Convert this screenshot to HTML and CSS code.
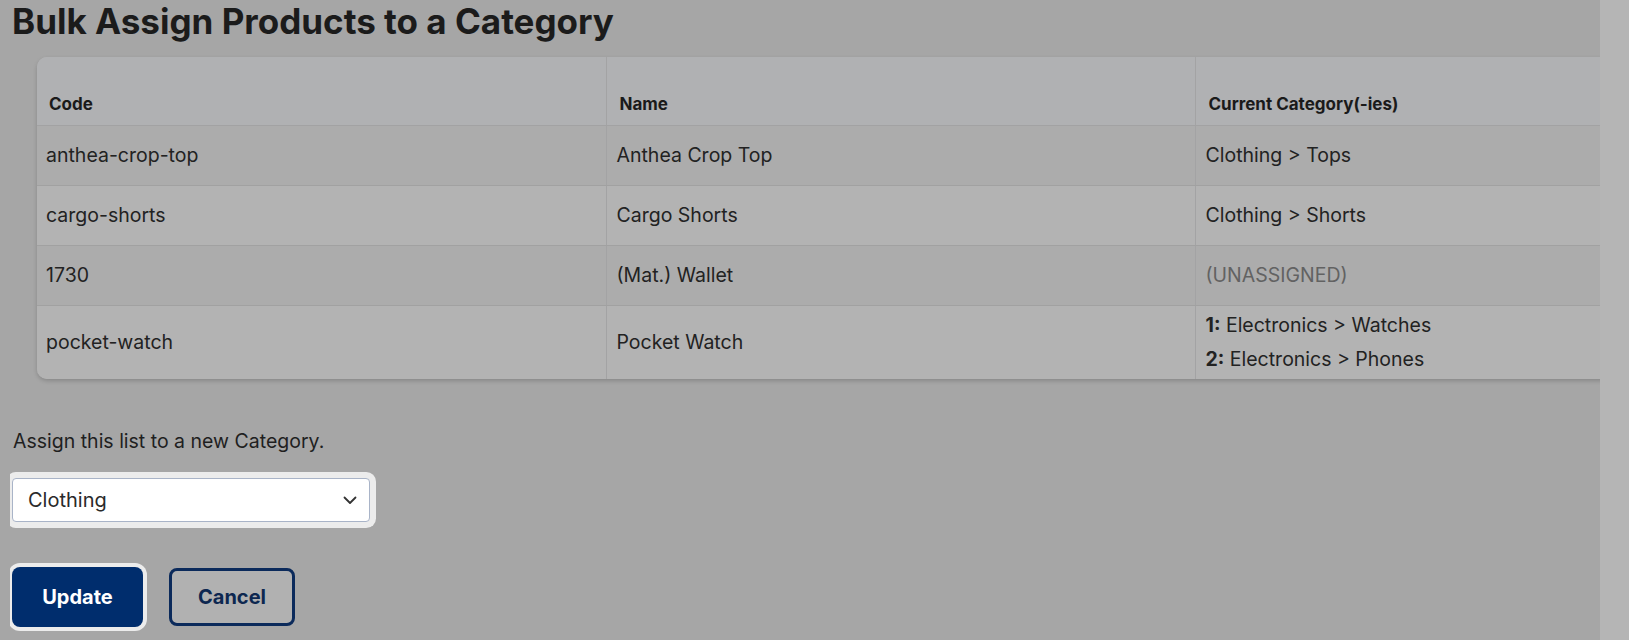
FILE: index.html
```html
<!DOCTYPE html>
<html lang="en">
<head>
<meta charset="utf-8">
<title>Bulk Assign Products to a Category</title>
<link rel="stylesheet" href="styles.css">
</head>
<body>
<div class="page">
  <main class="main">
    <h1 class="title">Bulk Assign Products to a Category</h1>
    <div class="card">
      <table class="grid">
        <thead>
          <tr class="head">
            <th class="c1">Code</th>
            <th class="c2">Name</th>
            <th class="c3">Current Category(-ies)</th>
          </tr>
        </thead>
        <tbody>
          <tr class="odd">
            <td>anthea-crop-top</td>
            <td>Anthea Crop Top</td>
            <td>Clothing &gt; Tops</td>
          </tr>
          <tr class="even">
            <td>cargo-shorts</td>
            <td>Cargo Shorts</td>
            <td>Clothing &gt; Shorts</td>
          </tr>
          <tr class="odd">
            <td>1730</td>
            <td>(Mat.) Wallet</td>
            <td class="muted">(UNASSIGNED)</td>
          </tr>
          <tr class="even tall">
            <td>pocket-watch</td>
            <td>Pocket Watch</td>
            <td class="multi">
              <div><b>1:</b> Electronics &gt; Watches</div>
              <div><b>2:</b> Electronics &gt; Phones</div>
            </td>
          </tr>
        </tbody>
      </table>
    </div>
    <p class="label">Assign this list to a new Category.</p>
    <div class="select-wrap">
      <select class="select">
        <option>Clothing</option>
        <option>Electronics</option>
      </select>
      <svg class="chev" width="14" height="9" viewBox="0 0 14 9"><path d="M1.5 1.5 L7 7 L12.5 1.5" fill="none" stroke="#333" stroke-width="1.8" stroke-linecap="round" stroke-linejoin="round"/></svg>
    </div>
    <div class="actions">
      <button class="btn primary">Update</button>
      <button class="btn secondary">Cancel</button>
    </div>
  </main>
  <div class="scroll"></div>
</div>
</body>
</html>
```

FILE: styles.css
```css
html, body {
  margin: 0;
  padding: 0;
  height: 100%;
}
body {
  background: #a6a6a6;
  font-family: "Inter", "Liberation Sans", sans-serif;
  color: #1e1e1e;
  overflow: hidden;
}
.page {
  display: flex;
  height: 640px;
}
.main {
  flex: 1;
  margin-left: 10px;
  padding-left: 2px;
  overflow-x: clip;
  overflow-y: visible;
  min-width: 0;
}
.scroll {
  width: 29px;
  flex: none;
  background: #b5b5b5;
}
.title {
  margin: 0;
  padding-top: 1px;
  font-size: 35px;
  line-height: 40px;
  font-weight: 700;
  letter-spacing: 0;
  color: #1b1b1b;
  white-space: nowrap;
}
.card {
  margin: 16px 0 0 25px;
  width: 1760px;
  border-radius: 10px;
  overflow: hidden;
  box-shadow: 0 2px 4px rgba(0,0,0,0.18);
  background: #b3b3b3;
}
.grid {
  width: 100%;
  border-collapse: collapse;
  table-layout: fixed;
}
.grid th, .grid td {
  text-align: left;
  padding: 0 10px;
  border-left: 1px solid #a3a3a4;
}
.grid th:first-child, .grid td:first-child {
  border-left: none;
  padding-left: 9px;
}
.c1 { width: 569px; }
.c2 { width: 589px; }
.head {
  background: #b0b1b3;
}
.head th {
  height: 68px;
  box-sizing: border-box;
  vertical-align: bottom;
  padding-bottom: 11px;
  padding-left: 13px;
  font-size: 17px;
  line-height: 20px;
  font-weight: 700;
  color: #1a1a1a;
  border-bottom: 1px solid #a2a2a3;
}
.head th:first-child { padding-left: 12px; }
.grid td {
  height: 59px;
  font-size: 19.5px;
  line-height: 24px;
  vertical-align: middle;
  color: #222;
}
.odd { background: #acacac; }
.even { background: #b3b3b3; }
tbody tr td { border-bottom: 1px solid #a1a1a1; }
tbody tr.tall td {
  height: 73px;
  border-bottom: none;
}
.grid td.muted { color: #626262; }
.multi div { line-height: 34px; }
.multi b { font-weight: 700; }
.label {
  margin: 50px 0 0 1px;
  font-size: 19.5px;
  line-height: 24px;
  color: #1f1f1f;
}
.select-wrap {
  position: relative;
  margin-top: 25px;
  width: 358px;
}
.select {
  display: block;
  width: 358px;
  height: 44px;
  box-sizing: border-box;
  appearance: none;
  -webkit-appearance: none;
  background: #fff;
  border: 1px solid #a9b4c8;
  border-radius: 4px;
  padding: 0 40px 0 15px;
  font-family: "Inter", "Liberation Sans", sans-serif;
  font-size: 20px;
  color: #2a2a2a;
  box-shadow: 0 0 0 6px #ececec;
  outline: none;
}
.chev {
  position: absolute;
  right: 13px;
  top: 18px;
  pointer-events: none;
}
.actions {
  display: flex;
  align-items: center;
  gap: 26px;
  margin-top: 45px;
}
.btn {
  font-family: "Inter", "Liberation Sans", sans-serif;
  font-size: 20px;
  font-weight: 700;
  border-radius: 8px;
  cursor: pointer;
  box-sizing: border-box;
}
.primary {
  width: 131px;
  height: 60px;
  background: #002d6d;
  color: #fff;
  border: none;
  box-shadow: 0 0 0 4px #ececec;
}
.secondary {
  width: 126px;
  height: 58px;
  background: #b1b1b1;
  color: #0d2750;
  border: 3px solid #0b2a5b;
}
```
